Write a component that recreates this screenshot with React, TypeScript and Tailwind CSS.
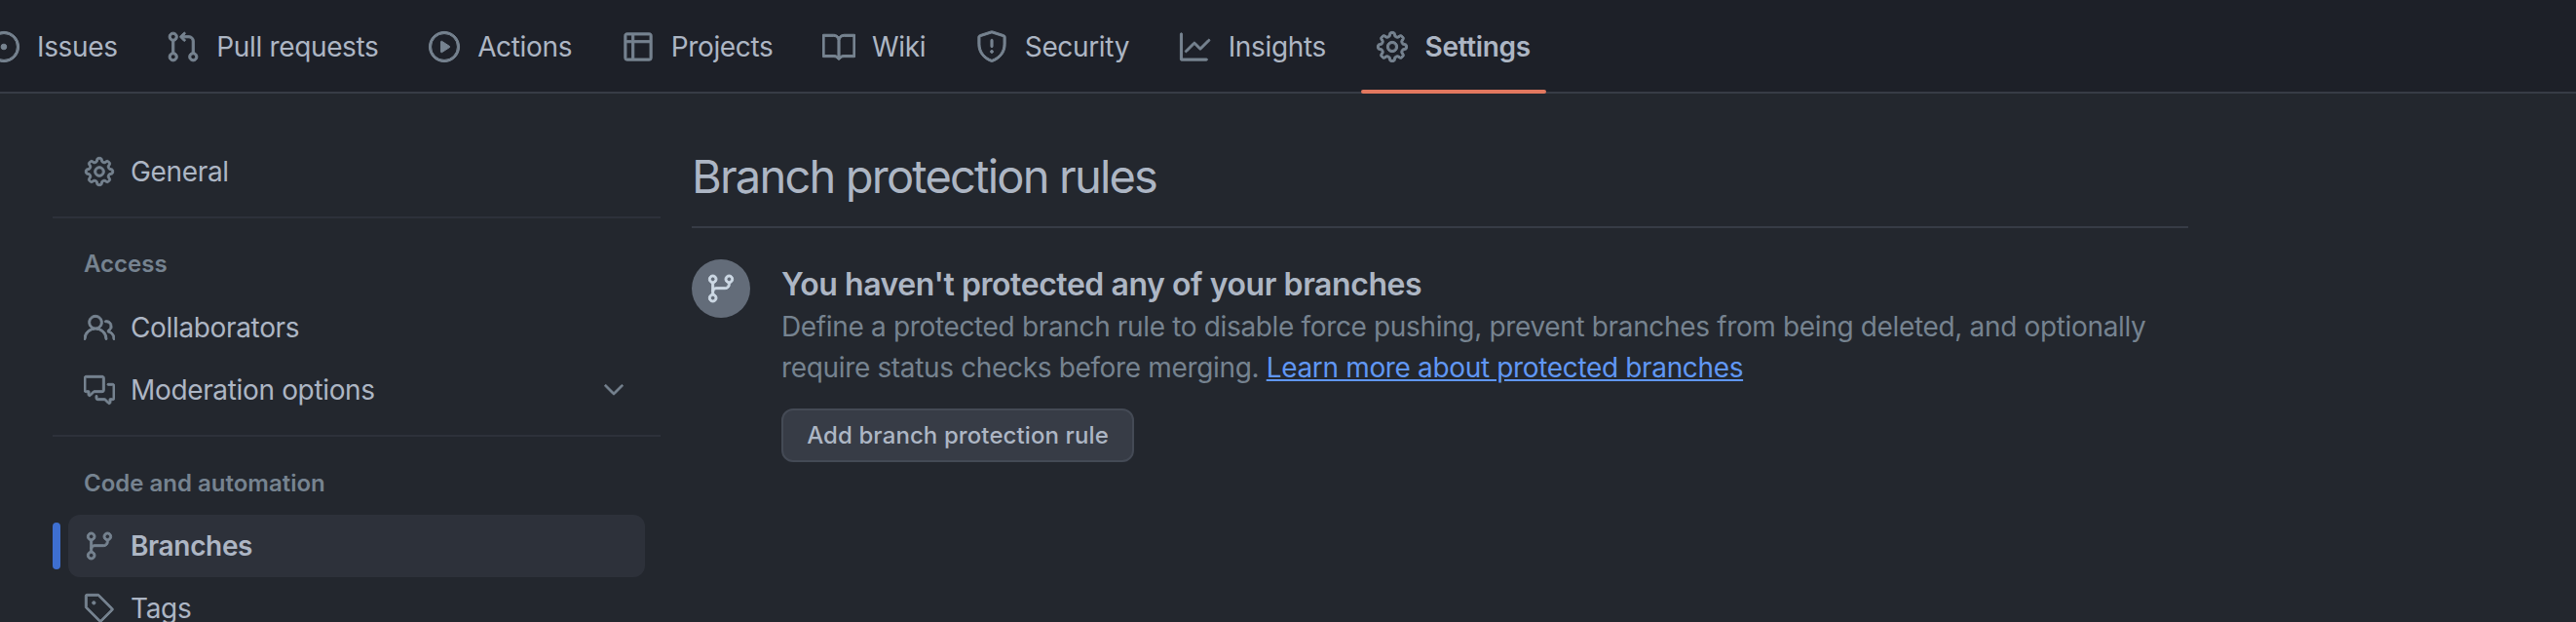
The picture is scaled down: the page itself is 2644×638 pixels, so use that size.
import React from 'react';
import type { IconType } from 'react-icons';
import {
  GoBook,
  GoChevronDown,
  GoCommentDiscussion,
  GoGear,
  GoGitBranch,
  GoGitPullRequest,
  GoGraph,
  GoIssueOpened,
  GoPeople,
  GoPlay,
  GoShield,
  GoTable,
  GoTag,
} from 'react-icons/go';

const tabs: { label: string; icon: IconType; active?: boolean }[] = [
  { label: 'Issues', icon: GoIssueOpened },
  { label: 'Pull requests', icon: GoGitPullRequest },
  { label: 'Actions', icon: GoPlay },
  { label: 'Projects', icon: GoTable },
  { label: 'Wiki', icon: GoBook },
  { label: 'Security', icon: GoShield },
  { label: 'Insights', icon: GoGraph },
  { label: 'Settings', icon: GoGear, active: true },
];

// the 24px go icons are thinner than the 16px ones in the picture, so thicken them a bit
const iconProps = { stroke: 'currentColor', strokeWidth: 0.7 };

function SidebarRow({ icon: Icon, label, active, chevron }: { icon: IconType; label: string; active?: boolean; chevron?: boolean }) {
  return (
    <div className="relative h-16 mx-4 flex items-center">
      {active && <span className="absolute left-[-16px] top-2 h-12 w-2 rounded-full bg-[#3e6fd0]" />}
      <div className={`flex h-16 flex-1 items-center rounded-xl px-4 ${active ? 'bg-[#2d313a]' : ''}`}>
        <Icon {...iconProps} className="w-8 h-8 shrink-0 text-[#768390]" />
        <span className={`ml-4 text-[#adb6c4] ${active ? 'font-semibold' : ''}`}>{label}</span>
        {chevron && <GoChevronDown {...iconProps} className="ml-auto w-8 h-8 text-[#768390]" />}
      </div>
    </div>
  );
}

export default function App() {
  return (
    <div className="h-[638px] w-[2644px] overflow-hidden bg-[#23272e] text-[28px] leading-[42px] tracking-[-0.345px] font-['Inter','Liberation_Sans',sans-serif]">
      {/* Repo tab bar */}
      <nav className="flex h-[96px] items-stretch gap-[19.6px] border-b-2 border-[#373c46] bg-[#1d2028] ml-[-28px]">
        {tabs.map(({ label, icon: Icon, active }) => (
          <div key={label} className="relative flex items-center px-4 pt-[2px]">
            <Icon {...iconProps} className="w-[34px] h-[34px] -mx-px shrink-0 text-[#768390]" />
            <span className={`ml-[18px] whitespace-nowrap text-[#adb6c4] ${active ? 'font-semibold' : ''}`}>{label}</span>
            {active && <span className="absolute bottom-[-2px] left-0 right-0 h-1 rounded-full bg-[#e2785f]" />}
          </div>
        ))}
      </nav>

      <div className="flex pl-[54px]">
        {/* Sidebar */}
        <aside className="w-[624px] shrink-0 pt-[48px]">
          <SidebarRow icon={GoGear} label="General" />
          <div className="mt-[14px] h-[2px] bg-[#2d313a]" />
          <div className="ml-[32px] mt-[31px] h-[32px] text-2xl leading-[32px] tracking-normal font-semibold text-[#768390]">Access</div>
          <div className="mt-[17px]">
            <SidebarRow icon={GoPeople} label="Collaborators" />
            <SidebarRow icon={GoCommentDiscussion} label="Moderation options" chevron />
          </div>
          <div className="mt-[14px] h-[2px] bg-[#2d313a]" />
          <div className="ml-[32px] mt-[32px] h-[32px] text-2xl leading-[32px] tracking-normal font-semibold text-[#768390]">Code and automation</div>
          <div className="mt-[16px]">
            <SidebarRow icon={GoGitBranch} label="Branches" active />
            <SidebarRow icon={GoTag} label="Tags" />
          </div>
        </aside>

        {/* Main column */}
        <main className="ml-[32px] w-[1536px] pt-[52px]">
          <h1 className="border-b-2 border-[#373c46] pb-[18px] text-[47px] leading-[66px] tracking-[-1.8px] font-normal text-[#adb6c4]">
            Branch protection rules
          </h1>
          <div className="mt-[32px] flex">
            <div className="flex h-[60px] w-[60px] shrink-0 items-center justify-center rounded-full bg-[#636c79]">
              <GoGitBranch {...iconProps} className="w-8 h-8 text-[#cdd9e5]" />
            </div>
            <div className="ml-[32px] pt-[5px]">
              <h2 className="text-[32px] leading-[42px] tracking-[-0.44px] font-semibold text-[#adb6c4]">You haven't protected any of your branches</h2>
              <p className="mt-[1px] max-w-[1440px] text-[#768390]">
                Define a protected branch rule to disable force pushing, prevent branches from being deleted, and optionally require status checks before merging.{' '}
                <a className="text-[#6097f5] underline">Learn more about protected branches</a>
              </p>
              <button
                type="button"
                className="mt-[21px] block h-[55px] w-[362px] rounded-xl border-2 border-[#444a55] bg-[#373c46] text-2xl tracking-[0.1px] font-medium text-[#adb6c4]"
              >
                Add branch protection rule
              </button>
            </div>
          </div>
        </main>
      </div>
    </div>
  );
}
